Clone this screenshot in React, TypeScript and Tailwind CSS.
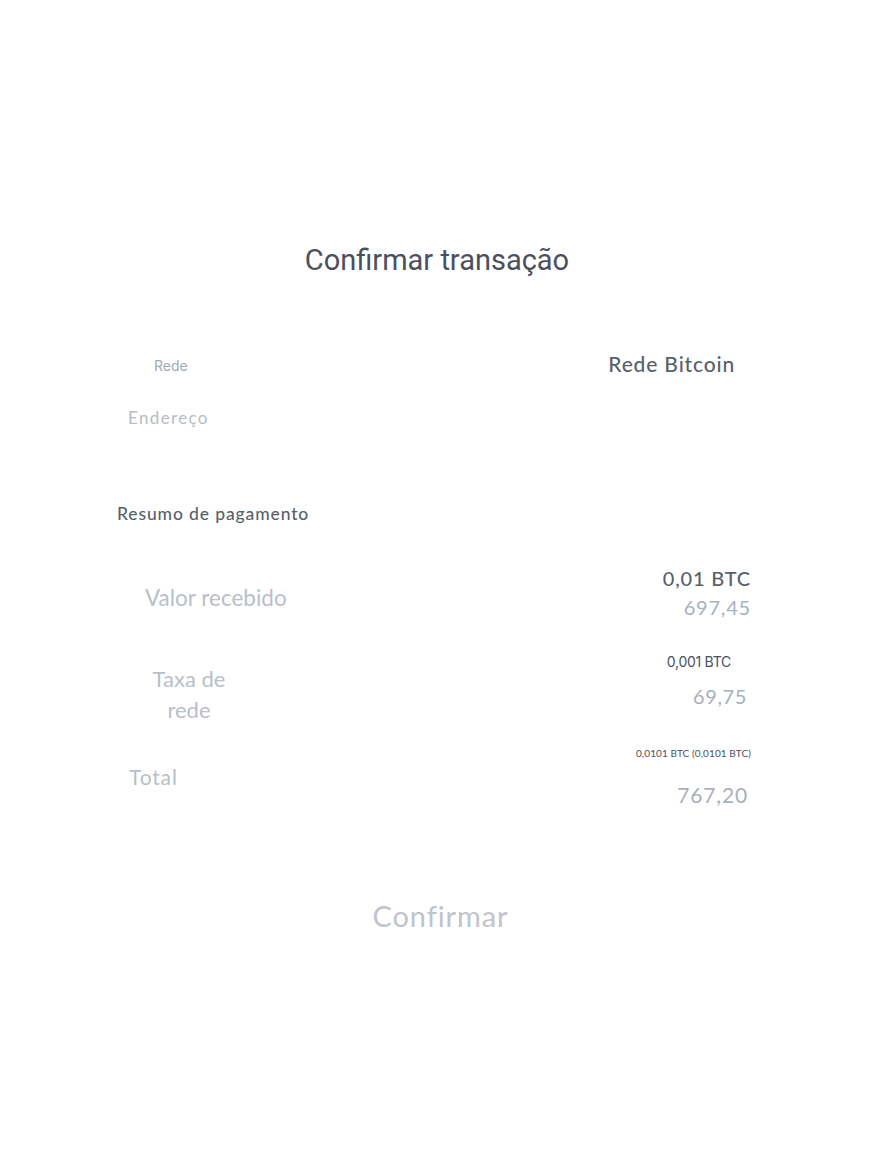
const soft = "font-['Lato','Noto_Sans',sans-serif]";

const App = () => {
  return (
    <div className="min-h-screen w-full bg-white">
      <div className="pt-[240px] pl-[117px] pr-[125px]">
        <h1 className="text-center text-[29px] leading-[40px] font-normal text-[#4b5060] font-['Roboto',sans-serif] pl-[6px]">
          Confirmar transação
        </h1>

        {/* rede */}
        <div className="mt-[70px] flex h-[28px] items-center justify-between">
          <p className="pl-[37px] pt-[3px] text-[14px] text-[#a3a9b4] font-['Inter',sans-serif]">
            Rede
          </p>
          <p className={`pr-[16px] text-[21px] font-medium tracking-[0.04em] text-[#5a5f6c] ${soft}`}>
            Rede Bitcoin
          </p>
        </div>
        <p className={`mt-[27px] pl-[11px] text-[17px] leading-[26px] tracking-[0.08em] text-[#b7bcc6] ${soft}`}>
          Endereço
        </p>

        <p className={`mt-[70px] text-[17.5px] leading-[26px] font-medium tracking-[0.05em] text-[#5a5f6c] ${soft}`}>
          Resumo de pagamento
        </p>

        {/* valor */}
        <div className="mt-[37px] flex items-start justify-between">
          <p className={`mt-[19px] pl-[28px] text-[22.5px] leading-[30px] text-[#b9bec8] ${soft}`}>
            Valor recebido
          </p>
          <div className={`flex flex-col items-end text-[20px] leading-[29px] tracking-[0.04em] ${soft}`}>
            <span className="font-medium text-[#5a5f6c]">0,01 BTC</span>
            <span className="text-[#a9b0bb]">697,45</span>
          </div>
        </div>

        {/* taxa */}
        <div className="mt-[30px] flex items-start justify-between">
          <p className={`mt-[11px] ml-[24px] w-[96px] text-center text-[22px] leading-[31px] text-[#b9bec8] ${soft}`}>
            Taxa de rede
          </p>
          <div className="flex flex-col items-end">
            <span className="pr-[20px] text-[14px] leading-[20px] text-[#4b5060] font-['Inter',sans-serif] tracking-[-0.02em]">
              0,001 BTC
            </span>
            <span className={`mt-[10px] pr-[4px] text-[20px] leading-[28px] tracking-[0.03em] text-[#a9b0bb] ${soft}`}>
              69,75
            </span>
          </div>
        </div>

        {/* total */}
        <div className="mt-[21px] flex items-start justify-between">
          <p className={`mt-[17px] pl-[12px] text-[21px] leading-[28px] tracking-[0.04em] text-[#b9bec8] ${soft}`}>
            Total
          </p>
          <div className="flex flex-col items-end">
            <span className={`text-[10px] leading-[14px] tracking-[0.01em] text-[#4b5060] ${soft}`}>
              0,0101 BTC (0,0101 BTC)
            </span>
            <span className={`mt-[21px] pr-[3px] text-[21px] leading-[28px] tracking-[0.04em] text-[#a9b0bb] ${soft}`}>
              767,20
            </span>
          </div>
        </div>

        <div className="mt-[87px] flex justify-center pl-[13px]">
          <button className={`text-[29px] leading-[40px] tracking-[0.03em] text-[#bfc4cc] ${soft}`}>
            Confirmar
          </button>
        </div>
      </div>
    </div>
  );
};

export default App;
